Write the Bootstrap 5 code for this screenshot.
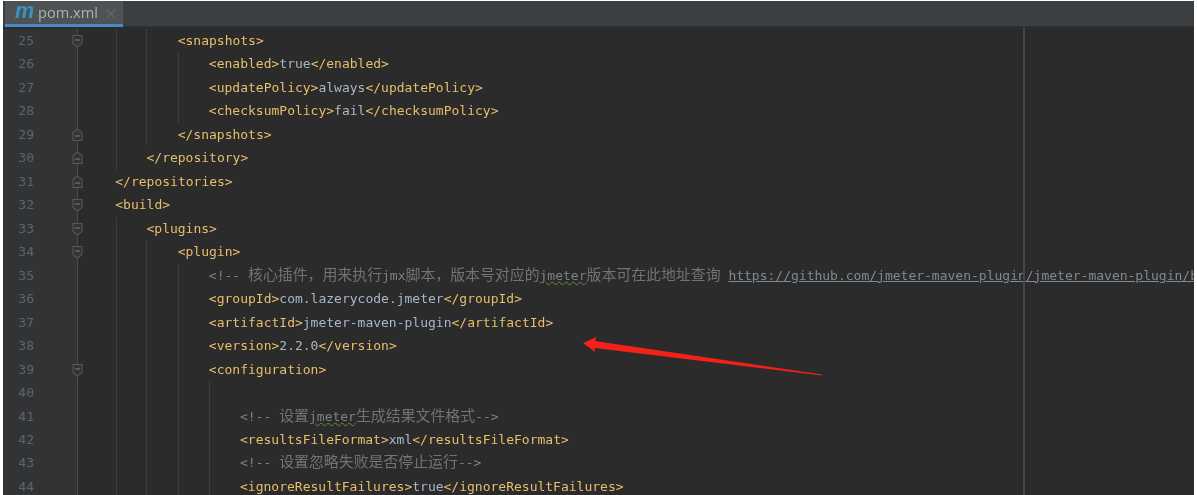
<!doctype html>
<html lang="zh"><head><meta charset="utf-8"><title>pom.xml</title>
<link href="https://cdn.jsdelivr.net/npm/bootstrap@5.3.0/dist/css/bootstrap.min.css" rel="stylesheet">
<style>
html,body{height:100%;background:#fff;overflow:hidden}
.ide-frame{position:relative;margin:1px 3px 0;height:494px;background:#2b2b2b;overflow:hidden}
.tab-strip{height:26px;background:#3c3f41;border-bottom:1px solid #323232}
.file-tab{width:118px;height:26px;margin-left:2px;background:#4e5254;border-bottom:3px solid #4a88c7;color:#a9b2b8;font:14.6px/23px "Open Sans",sans-serif;padding-left:10px;filter:blur(.25px)}
.mvn-m{font:italic 700 21.500px/21px "Liberation Sans",sans-serif;color:#3a93c2;width:23px}
.code-area{padding-top:2px;filter:blur(.3px)}
.ln{height:23.47px;font:13px/23.47px "DejaVu Sans Mono",monospace;white-space:pre;color:#a9b7c6}
.gut{position:relative;flex:0 0 75px;background:#313335;border-right:1px solid #4a4a4a;color:#606366}
.num{display:block;width:31px;text-align:right}
.fold{position:absolute;left:69px;top:5px;width:11px;height:14px}
.code{padding-left:37.3px}
.ind{display:inline-block;width:31.2px;height:23.47px;vertical-align:top;border-left:1px solid transparent}
.ind.on{border-left-color:#3d3d3d}
.first{margin-left:1px;width:30.2px}
.t{color:#e8bf6a}
.c{color:#808080}
.zh{font:14.9px/0 "Noto Sans CJK SC",sans-serif;color:#737373}
.u{color:#7e8a94;text-decoration:underline}
.w{text-decoration:underline wavy #5f9148 1px}
.margin-rule{position:absolute;left:1020px;top:27px;bottom:0;width:2px;background:#464646}
.red-arrow{position:absolute;left:0;top:-1px;pointer-events:none}
.fs{fill:#313335;stroke:#565656;stroke-width:1.1}
.fd{stroke:#757575;stroke-width:1.2}
</style></head>
<body>
<svg width="0" height="0" class="d-block">
<symbol id="fdown" viewBox="0 0 11 14"><path class="fs" d="M1 1.500h9v8l-4.500 3.500-4.500-3.500z"/><path class="fd" d="M3 6h5"/></symbol>
<symbol id="fup" viewBox="0 0 11 14"><path class="fs" d="M1 12.500h9v-8L5.500 1 1 4.500z"/><path class="fd" d="M3 8h5"/></symbol>
</svg>
<div class="ide-frame">
<div class="tab-strip d-flex">
<div class="file-tab d-flex align-items-start"><span class="mvn-m">m</span><span>pom.xml</span>
<svg class="ms-2 mt-2" width="10" height="10" viewBox="0 0 10 10"><path d="M.5.500l9 9M9.500.500l-9 9" stroke="#62676a" stroke-width="1.1"/></svg></div>
</div>
<div class="code-area">
<div class="ln d-flex"><div class="gut"><span class="num">25</span><svg class="fold"><use href="#fdown"/></svg></div><div class="code"><span class="ind first on"></span><span class="ind on"></span><span class="t">&lt;snapshots&gt;</span></div></div>
<div class="ln d-flex"><div class="gut"><span class="num">26</span></div><div class="code"><span class="ind first on"></span><span class="ind on"></span><span class="ind on"></span><span class="t">&lt;enabled&gt;</span>true<span class="t">&lt;/enabled&gt;</span></div></div>
<div class="ln d-flex"><div class="gut"><span class="num">27</span></div><div class="code"><span class="ind first on"></span><span class="ind on"></span><span class="ind on"></span><span class="t">&lt;updatePolicy&gt;</span>always<span class="t">&lt;/updatePolicy&gt;</span></div></div>
<div class="ln d-flex"><div class="gut"><span class="num">28</span></div><div class="code"><span class="ind first on"></span><span class="ind on"></span><span class="ind on"></span><span class="t">&lt;checksumPolicy&gt;</span>fail<span class="t">&lt;/checksumPolicy&gt;</span></div></div>
<div class="ln d-flex"><div class="gut"><span class="num">29</span><svg class="fold"><use href="#fup"/></svg></div><div class="code"><span class="ind first on"></span><span class="ind on"></span><span class="t">&lt;/snapshots&gt;</span></div></div>
<div class="ln d-flex"><div class="gut"><span class="num">30</span><svg class="fold"><use href="#fup"/></svg></div><div class="code"><span class="ind first on"></span><span class="t">&lt;/repository&gt;</span></div></div>
<div class="ln d-flex"><div class="gut"><span class="num">31</span><svg class="fold"><use href="#fup"/></svg></div><div class="code"><span class="t">&lt;/repositories&gt;</span></div></div>
<div class="ln d-flex"><div class="gut"><span class="num">32</span><svg class="fold"><use href="#fdown"/></svg></div><div class="code"><span class="t">&lt;build&gt;</span></div></div>
<div class="ln d-flex"><div class="gut"><span class="num">33</span><svg class="fold"><use href="#fdown"/></svg></div><div class="code"><span class="ind first on"></span><span class="t">&lt;plugins&gt;</span></div></div>
<div class="ln d-flex"><div class="gut"><span class="num">34</span><svg class="fold"><use href="#fdown"/></svg></div><div class="code"><span class="ind first on"></span><span class="ind on"></span><span class="t">&lt;plugin&gt;</span></div></div>
<div class="ln d-flex"><div class="gut"><span class="num">35</span></div><div class="code"><span class="ind first on"></span><span class="ind on"></span><span class="ind on"></span><span class="c">&lt;!-- </span><span class="zh">核心插件，用来执行</span><span class="c">jmx</span><span class="zh">脚本，版本号对应的</span><span class="c w">jmeter</span><span class="zh">版本可在此地址查询</span><span class="c"> </span><span class="u">https://github.com/jmeter-maven-plugin/jmeter-maven-plugin/b</span></div></div>
<div class="ln d-flex"><div class="gut"><span class="num">36</span></div><div class="code"><span class="ind first on"></span><span class="ind on"></span><span class="ind on"></span><span class="t">&lt;groupId&gt;</span>com.lazerycode.jmeter<span class="t">&lt;/groupId&gt;</span></div></div>
<div class="ln d-flex"><div class="gut"><span class="num">37</span></div><div class="code"><span class="ind first on"></span><span class="ind on"></span><span class="ind on"></span><span class="t">&lt;artifactId&gt;</span>jmeter-maven-plugin<span class="t">&lt;/artifactId&gt;</span></div></div>
<div class="ln d-flex"><div class="gut"><span class="num">38</span></div><div class="code"><span class="ind first on"></span><span class="ind on"></span><span class="ind on"></span><span class="t">&lt;version&gt;</span>2.2.0<span class="t">&lt;/version&gt;</span></div></div>
<div class="ln d-flex"><div class="gut"><span class="num">39</span><svg class="fold"><use href="#fdown"/></svg></div><div class="code"><span class="ind first on"></span><span class="ind on"></span><span class="ind on"></span><span class="t">&lt;configuration&gt;</span></div></div>
<div class="ln d-flex"><div class="gut"><span class="num">40</span></div><div class="code"><span class="ind first on"></span><span class="ind on"></span><span class="ind on"></span><span class="ind on"></span></div></div>
<div class="ln d-flex"><div class="gut"><span class="num">41</span></div><div class="code"><span class="ind first on"></span><span class="ind on"></span><span class="ind on"></span><span class="ind on"></span><span class="c">&lt;!-- </span><span class="zh">设置</span><span class="c w">jmeter</span><span class="zh">生成结果文件格式</span><span class="c">--&gt;</span></div></div>
<div class="ln d-flex"><div class="gut"><span class="num">42</span></div><div class="code"><span class="ind first on"></span><span class="ind on"></span><span class="ind on"></span><span class="ind on"></span><span class="t">&lt;resultsFileFormat&gt;</span>xml<span class="t">&lt;/resultsFileFormat&gt;</span></div></div>
<div class="ln d-flex"><div class="gut"><span class="num">43</span></div><div class="code"><span class="ind first on"></span><span class="ind on"></span><span class="ind on"></span><span class="ind on"></span><span class="c">&lt;!-- </span><span class="zh">设置忽略失败是否停止运行</span><span class="c">--&gt;</span></div></div>
<div class="ln d-flex"><div class="gut"><span class="num">44</span></div><div class="code"><span class="ind first on"></span><span class="ind on"></span><span class="ind on"></span><span class="ind on"></span><span class="t">&lt;ignoreResultFailures&gt;</span>true<span class="t">&lt;/ignoreResultFailures&gt;</span></div></div>
</div>
<div class="margin-rule"></div>
<svg class="red-arrow" width="1191" height="495" viewBox="3 0 1191 495"><path d="M583 343 596.500 337 595 341 822 374.500 822 375.500 594.500 348 595 352z" fill="#f4201a"/></svg>
</div>
<script src="https://cdn.jsdelivr.net/npm/bootstrap@5.3.0/dist/js/bootstrap.bundle.min.js"></script>
</body></html>
